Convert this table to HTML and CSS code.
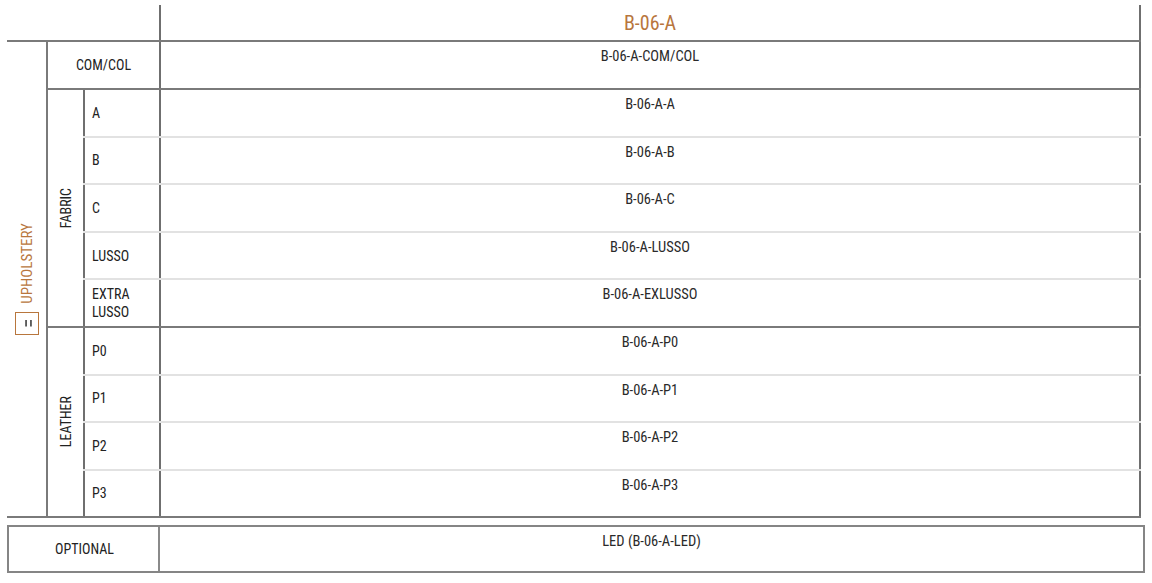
FILE: index.html
```html
<!DOCTYPE html>
<html>
<head>
<meta charset="utf-8">
<link rel="stylesheet" href="styles.css">
</head>
<body>
<div class="sheet">
  <div class="head">
    <div class="head-blank"></div>
    <div class="head-title">B-06-A</div>
  </div>
  <div class="body">
    <div class="uph">
      <span class="vtext orange uph-text">UPHOLSTERY</span>
      <svg class="uph-icon" width="24" height="23" viewBox="0 0 24 23">
        <rect x="0.5" y="0.5" width="23" height="22" fill="#fff" stroke="#b8763d" stroke-width="1"/>
        <rect x="10.3" y="8" width="1.5" height="6.5" fill="#333"/>
        <rect x="15.2" y="8" width="1.5" height="6.5" fill="#333"/>
      </svg>
    </div>
    <div class="groups">
      <div class="comcol">
        <div class="comcol-label">COM/COL</div>
        <div class="val">B-06-A-COM/COL</div>
      </div>
      <div class="group fabric">
        <div class="grp-label"><span class="vtext">FABRIC</span></div>
        <div class="rows">
          <div class="row"><div class="label">A</div><div class="val">B-06-A-A</div></div>
          <div class="row"><div class="label">B</div><div class="val">B-06-A-B</div></div>
          <div class="row"><div class="label">C</div><div class="val">B-06-A-C</div></div>
          <div class="row"><div class="label">LUSSO</div><div class="val">B-06-A-LUSSO</div></div>
          <div class="row"><div class="label">EXTRA<br>LUSSO</div><div class="val">B-06-A-EXLUSSO</div></div>
        </div>
      </div>
      <div class="group leather">
        <div class="grp-label"><span class="vtext">LEATHER</span></div>
        <div class="rows">
          <div class="row"><div class="label">P0</div><div class="val">B-06-A-P0</div></div>
          <div class="row"><div class="label">P1</div><div class="val">B-06-A-P1</div></div>
          <div class="row"><div class="label">P2</div><div class="val">B-06-A-P2</div></div>
          <div class="row"><div class="label">P3</div><div class="val">B-06-A-P3</div></div>
        </div>
      </div>
    </div>
  </div>
  <div class="optional">
    <div class="opt-label">OPTIONAL</div>
    <div class="opt-val">LED (B-06-A-LED)</div>
  </div>
</div>
</body>
</html>
```
FILE: styles.css
```css
* { box-sizing: border-box; }
html, body { margin: 0; padding: 0; background: #fff; }
body {
  font-family: "Liberation Sans Narrow", "Roboto Condensed", "Liberation Sans", sans-serif;
  font-size: 14px;
  color: #222;
}
.sheet {
  margin: 5px 0 0 7px;
  width: 1138px;
}
.head {
  display: flex;
  height: 35px;
  width: 1134px;
}
.head-blank { width: 152px; }
.head-title {
  flex: 1;
  border-left: 2px solid #6f6f6f;
  border-right: 2px solid #6f6f6f;
  display: flex;
  align-items: center;
  justify-content: center;
  color: #b8763d;
  font-size: 20px;
  padding-top: 1px;
}
.body {
  display: flex;
  width: 1134px;
  height: 478px;
  border-top: 2px solid #7a7a7a;
  border-bottom: 2px solid #7a7a7a;
}
.uph {
  width: 39px;
  display: flex;
  flex-direction: column;
  align-items: center;
  justify-content: center;
  gap: 8px;
  padding-left: 1px;
}
.vtext {
  writing-mode: vertical-rl;
  transform: rotate(180deg);
  line-height: 16px;
  white-space: nowrap;
}
.uph-text { font-size: 15px; }
.orange { color: #b8763d; }
.uph-icon { display: block; margin-left: -1px; }
.groups {
  flex: 1;
  display: flex;
  flex-direction: column;
}
.comcol {
  display: flex;
  height: 48px;
  border-bottom: 2px solid #7a7a7a;
}
.comcol-label {
  width: 113px;
  border-left: 2px solid #7a7a7a;
  display: flex;
  align-items: center;
  justify-content: center;
  line-height: 18px;
}
.val {
  flex: 1;
  border-left: 2px solid #6f6f6f;
  border-right: 2px solid #6f6f6f;
  text-align: center;
  padding-top: 8px;
  line-height: 14px;
  font-size: 14.5px;
  color: #2a2a2a;
}
.group {
  display: flex;
}
.fabric {
  height: 238px;
  border-bottom: 2px solid #7a7a7a;
}
.leather {
  flex: 1;
}
.grp-label {
  width: 37px;
  border-left: 2px solid #7a7a7a;
  display: flex;
  align-items: center;
  justify-content: center;
}
.rows {
  flex: 1;
  display: flex;
  flex-direction: column;
}
.row {
  flex: 1;
  display: flex;
  border-bottom: 2px solid #e2e2e2;
}
.row:last-child { border-bottom: none; }
.label {
  width: 76px;
  border-left: 2px solid #6f6f6f;
  display: flex;
  align-items: center;
  padding-left: 7px;
  line-height: 18px;
}
.optional {
  display: flex;
  margin-top: 7px;
  height: 48px;
  width: 1138px;
  border: 2px solid #858585;
}
.opt-label {
  width: 149px;
  display: flex;
  align-items: center;
  justify-content: center;
  padding-left: 2px;
}
.opt-val {
  flex: 1;
  border-left: 2px solid #8a8a8a;
  text-align: center;
  padding-top: 8px;
  line-height: 14px;
  font-size: 14.5px;
  color: #2a2a2a;
}
```
